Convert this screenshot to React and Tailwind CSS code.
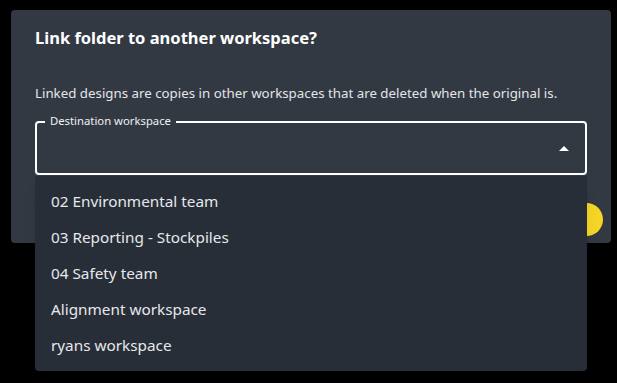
import { useState } from "react";

const workspaces = [
  "02 Environmental team",
  "03 Reporting - Stockpiles",
  "04 Safety team",
  "Alignment workspace",
  "ryans workspace",
];

const App = () => {
  const [selected, setSelected] = useState("");

  return (
    <div
      className="w-[617px] h-[383px] bg-black pt-[10px] pl-[11px] overflow-hidden"
      style={{ fontFamily: "'Noto Sans', sans-serif" }}
    >
      <div className="relative w-[600px] bg-[#333943] rounded-[4px] pt-[16px] pb-[7px]">
        <h2 className="px-6 text-[16.5px] leading-6 font-bold text-white">
          Link folder to another workspace?
        </h2>

        <p className="px-6 mt-[33px] text-[13.3px] leading-5 text-[#e3e5e8]">
          Linked designs are copies in other workspaces that are deleted when the original is.
        </p>

        <div className="px-6 mt-[18px]">
          <div className="relative h-[54px] border-2 border-white rounded-[4px] flex items-center justify-end pr-[16px]">
            <span className="absolute left-[8px] -top-[10px] px-[5px] bg-[#333943] text-[11.3px] leading-4 text-[#eef0f2]">
              Destination workspace
            </span>
            <span className="text-white">{selected}</span>
            <svg width="10" height="5" viewBox="0 0 10 5" className="ml-auto">
              <path d="M0 5 L5 0 L10 5 Z" fill="white" />
            </svg>
          </div>
        </div>

        <div className="flex justify-end pr-[8px] mt-[28px]">
          <button className="h-[33px] w-[90px] rounded-full bg-[#f5d526]" />
        </div>

        <ul className="absolute left-[24px] top-[166px] w-[552px] bg-[#282e38] rounded-b-[4px] pt-[7px] pb-[8px] shadow-lg">
          {workspaces.map((w) => (
            <li
              key={w}
              onClick={() => setSelected(w)}
              className="h-[36px] px-4 flex items-center text-[15.3px] text-[#e6e8eb] cursor-pointer"
            >
              {w}
            </li>
          ))}
        </ul>
      </div>
    </div>
  );
};

export default App;
